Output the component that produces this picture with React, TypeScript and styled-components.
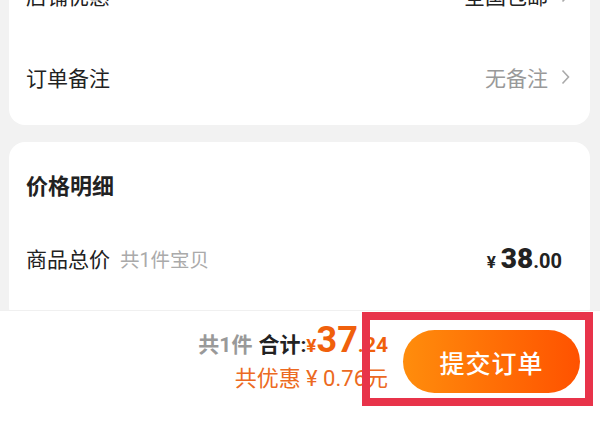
import React from 'react';
import styled, { createGlobalStyle } from 'styled-components';

const GlobalStyle = createGlobalStyle`
  html, body {
    margin: 0;
    padding: 0;
    background: #f2f2f2;
    font-family: Roboto, "Noto Sans CJK SC", sans-serif;
  }
  * {
    box-sizing: border-box;
  }
`;

const Page = styled.div`
  display: flex;
  flex-direction: column;
  height: 100vh;
  overflow: hidden;
`;

const Content = styled.div`
  flex: 1;
  overflow: hidden;
  padding: 0 10px 0 9px;
  margin-top: -56px;
  display: flex;
  flex-direction: column;
  gap: 17px;
`;

const Card = styled.section`
  background: #fff;
  border-radius: 16px;
  padding: 10px 20px 7px 17px;
  flex-shrink: 0;
`;

const DetailCard = styled(Card)`
  padding-top: 30px;
  padding-bottom: 40px;
`;

const Row = styled.div`
  display: flex;
  align-items: center;
  justify-content: space-between;
  height: 82px;
  font-size: 21px;
  color: #222;
`;

const Value = styled.span<{ muted?: boolean }>`
  display: flex;
  align-items: center;
  gap: 13px;
  color: ${props => (props.muted ? '#999' : '#222')};
  font-size: 21px;
`;

const Chevron = styled.svg`
  width: 9px;
  height: 18px;
`;

const Title = styled.h3`
  margin: 0;
  font-size: 22px;
  line-height: 30px;
  font-weight: 700;
  color: #222;
`;

const PriceRow = styled.div`
  display: flex;
  align-items: center;
  justify-content: space-between;
  height: 50px;
  margin-top: 31px;
  padding-right: 8px;
`;

const Label = styled.span`
  font-size: 21px;
  color: #222;

  small {
    margin-left: 10px;
    font-size: 19.5px;
    color: #aaa;
  }
`;

const Amount = styled.span`
  color: #222;
  font-weight: 700;
  white-space: nowrap;

  i {
    font-style: normal;
    font-size: 17px;
    margin-right: 5px;
  }
  b {
    font-size: 28px;
  }
  em {
    font-style: normal;
    font-size: 20px;
  }
`;

const BottomBar = styled.footer`
  height: 117px;
  flex-shrink: 0;
  background: #fff;
  border-top: 1px solid #f0f0f0;
  display: flex;
  justify-content: flex-end;
  align-items: flex-start;
  padding: 19px 20px 0 0;
  gap: 15px;
`;

const Summary = styled.div`
  display: flex;
  flex-direction: column;
  align-items: flex-end;
  margin-top: -8px;
`;

const TotalLine = styled.div`
  display: flex;
  align-items: baseline;
  white-space: nowrap;
  height: 40px;
  font-size: 21px;
  font-weight: 700;
  color: #222;
`;

const Count = styled.span`
  color: #999;
  margin-right: 6px;
`;

const Orange = styled.span<{ size: number }>`
  color: #f0600c;
  font-size: ${props => props.size}px;
  line-height: 1;
`;

const Discount = styled.div`
  margin-top: -2px;
  font-size: 22px;
  color: #ec6a22;
  white-space: nowrap;
`;

const SubmitWrap = styled.div`
  position: relative;
`;

const SubmitButton = styled.button`
  width: 177px;
  height: 63px;
  border: none;
  border-radius: 32px;
  background: linear-gradient(90deg, #ff8d0c 0%, #ff5200 100%);
  color: #fff;
  font-family: "Noto Sans CJK SC", sans-serif;
  font-size: 25px;
  font-weight: 500;
  letter-spacing: 1px;
`;

const Highlight = styled.div`
  position: absolute;
  left: -41px;
  right: -13px;
  top: -18px;
  bottom: -13px;
  border: 8px solid #e8334a;
  pointer-events: none;
`;

const ChevronIcon = () => (
  <Chevron viewBox="0 0 9 18">
    <path d="M1.5 2.5l6 6.5-6 6.5" fill="none" stroke="#aaa" strokeWidth="1.6" />
  </Chevron>
);

export default function App(): JSX.Element {
  return (
    <Page>
      <GlobalStyle />
      <Content>
        <Card>
          <Row>
            <span>店铺优惠</span>
            <Value>
              全国包邮
              <ChevronIcon />
            </Value>
          </Row>
          <Row>
            <span>订单备注</span>
            <Value muted>
              无备注
              <ChevronIcon />
            </Value>
          </Row>
        </Card>
        <DetailCard>
          <Title>价格明细</Title>
          <PriceRow>
            <Label>
              商品总价<small>共1件宝贝</small>
            </Label>
            <Amount>
              <i>¥</i>
              <b>38</b>
              <em>.00</em>
            </Amount>
          </PriceRow>
        </DetailCard>
      </Content>
      <BottomBar>
        <Summary>
          <TotalLine>
            <Count>共1件</Count>
            合计:
            <Orange size={19}>¥</Orange>
            <Orange size={36}>37</Orange>
            <Orange size={21}>.24</Orange>
          </TotalLine>
          <Discount>共优惠 ¥ 0.76元</Discount>
        </Summary>
        <SubmitWrap>
          <SubmitButton>提交订单</SubmitButton>
          <Highlight />
        </SubmitWrap>
      </BottomBar>
    </Page>
  );
}
